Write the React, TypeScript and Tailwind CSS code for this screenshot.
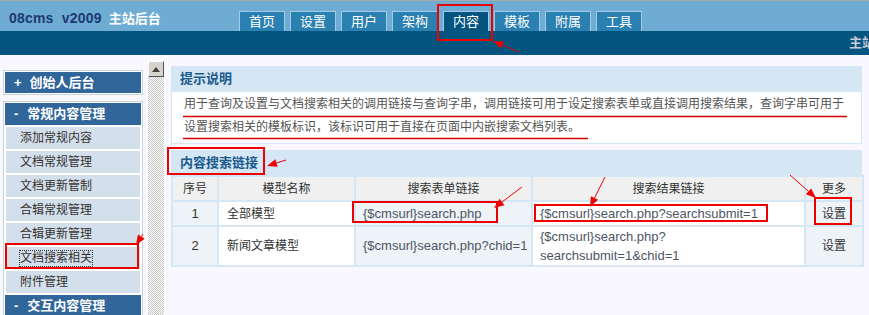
import React from "react";

const tabs = ["首页", "设置", "用户", "架构", "内容", "模板", "附属", "工具"];
const menuItems = ["添加常规内容", "文档常规管理", "文档更新管制", "合辑常规管理", "合辑更新管理", "文档搜索相关", "附件管理"];

type Arrow = [number, number, number, number];

const arrows: Arrow[] = [
  [519, 52, 493, 41],
  [143, 234, 136, 245],
  [286, 160, 267, 166],
  [522, 187, 494, 208],
  [605, 177, 590, 207],
  [790, 175, 816, 198],
];

const boxes = [
  [438, 5, 54, 35],
  [6, 244, 132, 24],
  [168, 148, 96, 26],
  [353, 202, 144, 20],
  [535, 205, 232, 16],
  [815, 198, 36, 26],
];

function ArrowMark({ a }: { a: Arrow }) {
  const [x1, y1, x2, y2] = a;
  const dx = x2 - x1;
  const dy = y2 - y1;
  const len = Math.sqrt(dx * dx + dy * dy);
  const ux = dx / len;
  const uy = dy / len;
  const bx = x2 - ux * 10;
  const by = y2 - uy * 10;
  const px = -uy * 4;
  const py = ux * 4;
  return (
    <g>
      <line x1={x1} y1={y1} x2={bx} y2={by} stroke="#ee0000" strokeWidth="1" />
      <polygon points={`${x2},${y2} ${bx + px},${by + py} ${bx - px},${by - py}`} fill="#ee0000" />
    </g>
  );
}

function Annotations() {
  return (
    <svg className="absolute left-0 top-0 pointer-events-none" width="869" height="315">
      {boxes.map(([x, y, w, h], i) => (
        <rect key={i} x={x} y={y} width={w} height={h} fill="none" stroke="#ee0000" strokeWidth="2" />
      ))}
      <line x1="183" y1="116.5" x2="847" y2="116.5" stroke="#d40000" strokeWidth="1.5" />
      <line x1="183" y1="138.5" x2="588" y2="138.5" stroke="#d40000" strokeWidth="1.5" />
      {arrows.map((a, i) => (
        <ArrowMark key={i} a={a} />
      ))}
    </svg>
  );
}

export default function App() {
  return (
    <div className="relative w-[869px] h-[315px] overflow-hidden bg-[#f8f8fe] font-['Liberation_Sans','Noto_Sans_CJK_SC',sans-serif] text-[12px] text-[#333]">
      {/* top header */}
      <div className="h-[31px] border-t border-[#a8a8a8] bg-[#6facd3] flex items-end">
        <div className="w-[239px] self-start pt-[7px] pl-[9px] flex items-center gap-[7px] whitespace-nowrap">
          <span className="text-[14px] font-bold text-[#1c3a70] tracking-[0.2px]">08cms&nbsp;&nbsp;v2009</span>
          <span className="text-[13px] font-bold text-white">主站后台</span>
        </div>
        <div className="flex gap-[5px] items-end">
          {tabs.map((t) => (
            <div
              key={t}
              className={`w-[46px] h-[20px] border border-b-0 border-[#a2cbe6] text-white text-[13px] leading-[19px] text-center ${
                t === "内容" ? "bg-[#03557f]" : "bg-[#2a80b0]"
              }`}
            >
              {t}
            </div>
          ))}
        </div>
      </div>
      <div className="h-[24px] bg-[#03557f] flex justify-end">
        <div className="w-[20px] overflow-hidden whitespace-nowrap text-[13px] font-bold text-[#c8ccd6] leading-[24px]">主站首页</div>
      </div>

      {/* body */}
      <div className="flex">
        {/* sidebar */}
        <div className="w-[146px] pl-[3px] pt-[15px] flex flex-col gap-[6px]">
          <div className="w-[140px] border border-[#c6d4e2] bg-white p-px">
            <div className="h-[21px] bg-[#31669b] text-white text-[13px] font-bold flex items-center pl-[9px] gap-[8px]">
              <span>+</span>
              <span>创始人后台</span>
            </div>
          </div>
          <div className="w-[140px] border border-[#c6d4e2] bg-white p-px flex flex-col gap-[2px]">
            <div className="h-[22px] bg-[#31669b] text-white text-[13px] font-bold flex items-center pl-[9px] gap-[9px]">
              <span>-</span>
              <span>常规内容管理</span>
            </div>
            {menuItems.map((m) => (
              <div key={m} className="h-[22px] mx-px bg-[#d3dfea] flex items-center pl-[14px] text-[12px] text-[#333]">
                {m === "文档搜索相关" ? (
                  <span className="outline-1 outline-dotted outline-[#333] leading-[15px]">{m}</span>
                ) : (
                  m
                )}
              </div>
            ))}
            <div className="h-[22px] bg-[#31669b] text-white text-[13px] font-bold flex items-center pl-[9px] gap-[9px]">
              <span>-</span>
              <span>交互内容管理</span>
            </div>
          </div>
        </div>

        {/* scrollbar strip */}
        <div className="ml-[2px] mt-[6px] w-[16px] h-[260px] flex flex-col bg-[repeating-conic-gradient(#c4c4c4_0%_25%,#ffffff_0%_50%)] bg-size-[2px_2px]">
          <div className="h-[16px] w-[16px] bg-[#d6d3ce] border border-t-white border-l-white border-r-[#555] border-b-[#555] flex items-center justify-center">
            <svg width="8" height="5" viewBox="0 0 8 5">
              <polygon points="4,0 8,5 0,5" fill="#444" />
            </svg>
          </div>
        </div>

        {/* main */}
        <div className="ml-[7px] pt-[11px] w-[691px] flex flex-col">
          <div className="flex flex-col">
            <div className="h-[26px] bg-[#d5e6f5] flex items-center pl-[9px] text-[13px] font-bold text-[#1b5a8c]">提示说明</div>
            <div className="h-[52px] bg-white border border-t-0 border-[#d5e6f5] pl-[12px] pt-[1px] text-[12px] leading-[23px] text-[#555]">
              <div>用于查询及设置与文档搜索相关的调用链接与查询字串，调用链接可用于设定搜索表单或直接调用搜索结果，查询字串可用于</div>
              <div>设置搜索相关的模板标识，该标识可用于直接在页面中内嵌搜索文档列表。</div>
            </div>
          </div>

          <div className="mt-[6px] flex flex-col">
            <div className="h-[25px] bg-[#d5e6f5] flex items-center pl-[9px] text-[13px] font-bold text-[#1b5a8c]">内容搜索链接</div>
            <table className="w-[691px] border-collapse border-2 border-[#d5e6f5] table-fixed">
              <colgroup>
                <col className="w-[46px]" />
                <col className="w-[137px]" />
                <col className="w-[177px]" />
                <col className="w-[273px]" />
                <col className="w-[58px]" />
              </colgroup>
              <thead>
                <tr className="h-[25px] bg-[#f0f0f0] text-[12px] text-[#333]">
                  <th className="border-2 border-[#d5e6f5] font-normal">序号</th>
                  <th className="border-2 border-[#d5e6f5] font-normal">模型名称</th>
                  <th className="border-2 border-[#d5e6f5] font-normal">搜索表单链接</th>
                  <th className="border-2 border-[#d5e6f5] font-normal">搜索结果链接</th>
                  <th className="border-2 border-[#d5e6f5] font-normal">更多</th>
                </tr>
              </thead>
              <tbody className="text-[12px]">
                <tr className="h-[25px]">
                  <td className="border-2 border-[#d5e6f5] bg-[#eef3f7] text-center text-[13px]">1</td>
                  <td className="border-2 border-[#d5e6f5] bg-white pl-[8px]">全部模型</td>
                  <td className="border-2 border-[#d5e6f5] bg-[#eef3f7] pl-[7px] text-[13px] text-[#4b5566]">{"{$cmsurl}search.php"}</td>
                  <td className="border-2 border-[#d5e6f5] bg-white pl-[7px] text-[13px] text-[#4b5566]">{"{$cmsurl}search.php?searchsubmit=1"}</td>
                  <td className="border-2 border-[#d5e6f5] bg-[#eef3f7] text-center">设置</td>
                </tr>
                <tr className="h-[37px]">
                  <td className="border-2 border-[#d5e6f5] bg-[#eef3f7] text-center text-[13px]">2</td>
                  <td className="border-2 border-[#d5e6f5] bg-white pl-[8px]">新闻文章模型</td>
                  <td className="border-2 border-[#d5e6f5] bg-[#eef3f7] pl-[7px] text-[13px] text-[#4b5566]">{"{$cmsurl}search.php?chid=1"}</td>
                  <td className="border-2 border-[#d5e6f5] bg-white pl-[7px] text-[13px] leading-[19px] text-[#4b5566]">
                    {"{$cmsurl}search.php?"}
                    <br />
                    {"searchsubmit=1&chid=1"}
                  </td>
                  <td className="border-2 border-[#d5e6f5] bg-[#eef3f7] text-center">设置</td>
                </tr>
              </tbody>
            </table>
          </div>

          <div className="mt-[50px] ml-[24px] w-[430px] border-t-2 border-[#7ab6d9]" />
        </div>
      </div>

      <Annotations />
    </div>
  );
}
